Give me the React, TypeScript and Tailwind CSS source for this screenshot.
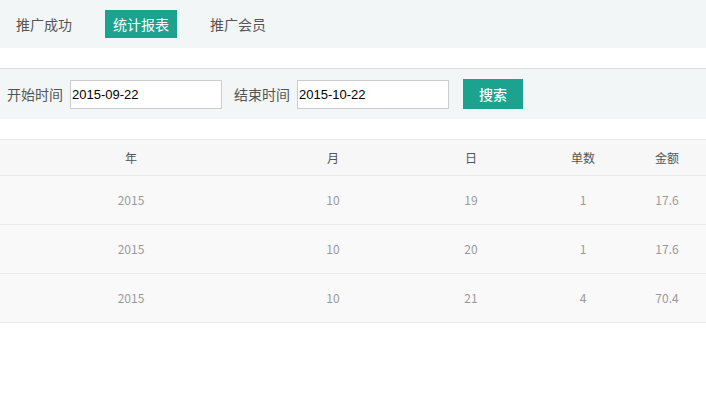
import React from 'react';

const rows = [
  { y: '2015', m: '10', d: '19', n: '1', amt: '17.6' },
  { y: '2015', m: '10', d: '20', n: '1', amt: '17.6' },
  { y: '2015', m: '10', d: '21', n: '4', amt: '70.4' },
];

const font = { fontFamily: '"Noto Sans CJK SC", "Noto Sans", sans-serif' };

export default function App() {
  const tabs = ['推广成功', '统计报表', '推广会员'];

  return (
    <div className="w-[706px] h-[394px] bg-white overflow-hidden" style={font}>
      {/* Tabs */}
      <div className="h-[48px] bg-[#f3f6f7] flex items-center pl-[9px] gap-[26px]">
        {tabs.map((t, i) => (
          <div
            key={t}
            className={
              i === 1
                ? 'h-[28px] w-[72px] flex items-center justify-center text-[14px] text-white bg-[#1ba390]'
                : 'h-[28px] w-[70px] flex items-center justify-center text-[14px] text-[#555]'
            }
          >
            {t}
          </div>
        ))}
      </div>

      {/* Search bar */}
      <div className="mt-[20px] border-t border-[#dcdcdc] h-[51px] bg-[#f3f6f7] flex items-center pl-[7px] text-[14px] text-[#555]">
        <span>开始时间</span>
        <input
          readOnly
          value="2015-09-22"
          className="ml-[7px] w-[152px] h-[29px] border border-[#ccc] bg-white px-[1px] text-[13px] text-black outline-none"
          style={{ fontFamily: '"Liberation Sans", Arial, sans-serif' }}
        />
        <span className="ml-[12px]">结束时间</span>
        <input
          readOnly
          value="2015-10-22"
          className="ml-[7px] w-[152px] h-[29px] border border-[#ccc] bg-white px-[1px] text-[13px] text-black outline-none"
          style={{ fontFamily: '"Liberation Sans", Arial, sans-serif' }}
        />
        <button className="ml-[14px] w-[60px] h-[30px] bg-[#1ba390] text-white text-[14px] font-medium">搜索</button>
      </div>

      {/* Table */}
      <table className="mt-[20px] w-[706px] border-collapse text-[12px] table-fixed">
        <colgroup>
          <col className="w-[262px]" />
          <col className="w-[142px]" />
          <col className="w-[134px]" />
          <col className="w-[90px]" />
          <col className="w-[78px]" />
        </colgroup>
        <thead>
          <tr className="h-[36px] bg-[#f7f7f7] border-y border-[#eaeaea] text-[#555]">
            <th className="font-normal">年</th>
            <th className="font-normal">月</th>
            <th className="font-normal">日</th>
            <th className="font-normal">单数</th>
            <th className="font-normal">金额</th>
          </tr>
        </thead>
        <tbody>
          {rows.map((r) => (
            <tr key={r.d} className="h-[49px] bg-[#f9f9f9] border-b border-[#eaeaea] text-[#999] text-center">
              <td>{r.y}</td>
              <td>{r.m}</td>
              <td>{r.d}</td>
              <td>{r.n}</td>
              <td>{r.amt}</td>
            </tr>
          ))}
        </tbody>
      </table>
    </div>
  );
}
